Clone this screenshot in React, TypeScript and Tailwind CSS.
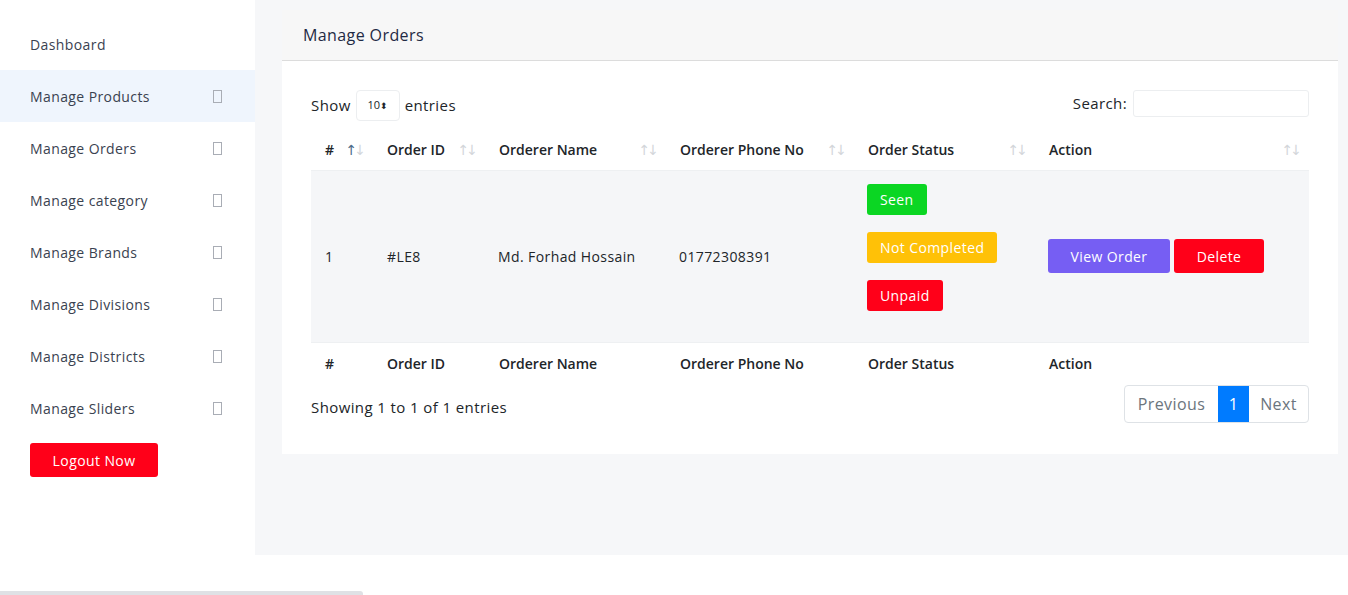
import React from 'react';

const menu = [
  'Manage Products',
  'Manage Orders',
  'Manage category',
  'Manage Brands',
  'Manage Divisions',
  'Manage Districts',
  'Manage Sliders',
];

function Tofu() {
  return <span className="inline-block h-[13px] w-[9px] border border-[#a9adb5]" />;
}

function SortIcon({ active }: { active?: boolean }) {
  return (
    <span className="font-['DejaVu_Sans',sans-serif] text-[14px] font-normal leading-none tracking-[-3px] text-[#d3d6da]">
      <span className={active ? 'text-[#4d6c8a]' : ''}>↑</span>↓
    </span>
  );
}

function Sidebar() {
  return (
    <aside className="w-[255px] shrink-0 bg-white">
      <div className="flex h-[70px] items-center pl-[30px] pt-[18px] text-[14px] text-[#3a4250]">
        Dashboard
      </div>
      {menu.map((m, i) => (
        <div
          key={m}
          className={`flex h-[52px] items-center justify-between pl-[30px] pr-[33px] text-[14px] text-[#3a4250] ${
            i === 0 ? 'bg-[#eff5fd]' : ''
          }`}
        >
          <span>{m}</span>
          <Tofu />
        </div>
      ))}
      <div className="pl-[30px] pt-[9px]">
        <button className="h-[34px] w-[128px] rounded-[3px] bg-[#ff0019] text-[14px] text-white">
          Logout Now
        </button>
      </div>
    </aside>
  );
}

const heads = [
  { t: '#', w: 'w-[62px]', active: true },
  { t: 'Order ID', w: 'w-[112px]' },
  { t: 'Orderer Name', w: 'w-[181px]' },
  { t: 'Orderer Phone No', w: 'w-[188px]' },
  { t: 'Order Status', w: 'w-[181px]' },
  { t: 'Action', w: '' },
];

const badge = 'flex h-[31px] items-center rounded-[3px] px-[13px] font-medium text-white';

function OrdersTable() {
  return (
    <table className="w-full table-fixed border-collapse text-[14px] text-[#212529]">
      <thead>
        <tr className="h-[35px]">
          {heads.map((h) => (
            <th
              key={h.t}
              className={`${h.w} pb-[5px] pl-[14px] pr-[10px] text-left font-semibold tracking-normal`}
            >
              <div className="flex items-center justify-between">
                <span>{h.t}</span>
                <SortIcon active={h.active} />
              </div>
            </th>
          ))}
        </tr>
      </thead>
      <tbody>
        <tr className="border-y border-[#eef0f2] bg-[#f5f6f8]">
          <td className="pl-[14px]">1</td>
          <td className="pl-[14px]">#LE8</td>
          <td className="pl-[13px]">Md. Forhad Hossain</td>
          <td className="pl-[13px]">01772308391</td>
          <td className="pl-[13px] pt-[13px]">
            <div className="flex flex-col items-start gap-[17px] pb-[31px]">
              <span className={`${badge} bg-[#0bd623]`}>Seen</span>
              <span className={`${badge} bg-[#ffc107]`}>Not Completed</span>
              <span className={`${badge} bg-[#ff0019]`}>Unpaid</span>
            </div>
          </td>
          <td className="pl-[13px]">
            <div className="flex gap-[4px]">
              <button className="h-[34px] w-[122px] rounded-[3px] bg-[#765ef3] font-medium text-white">
                View Order
              </button>
              <button className="h-[34px] w-[90px] rounded-[3px] bg-[#ff0019] font-medium text-white">
                Delete
              </button>
            </div>
          </td>
        </tr>
      </tbody>
      <tfoot>
        <tr className="h-[38px]">
          {heads.map((h) => (
            <th key={h.t} className="pl-[14px] pt-[4px] text-left font-semibold tracking-normal">
              {h.t}
            </th>
          ))}
        </tr>
      </tfoot>
    </table>
  );
}

export default function App() {
  return (
    <div className="relative h-[595px] w-[1348px] overflow-hidden bg-white font-['Open_Sans',sans-serif] tracking-[0.4px]">
      <div className="flex h-[555px]">
        <Sidebar />
        <main className="flex-1 bg-[#f6f7f9] pl-[27px] pr-[10px] pt-[10px]">
          <div className="bg-white">
            <div className="flex h-[51px] items-center border-b border-[#dcdcdc] bg-[#f7f7f7] pl-[21px] text-[16px] text-[#1f2a44]">
              Manage Orders
            </div>
            <div className="px-[29px] pb-[31px] pt-[29px]">
              <div className="flex items-center justify-between text-[15px] text-[#212529]">
                <div className="flex items-center">
                  <span>Show</span>
                  <span className="mx-[5px] flex h-[31px] w-[44px] items-center justify-center rounded-[4px] border border-[#eceef0] text-[11px] tracking-normal">
                    10<span className="text-[9px]">⬍</span>
                  </span>
                  <span>entries</span>
                </div>
                <div className="flex items-center pb-[4px]">
                  <span>Search:</span>
                  <span className="ml-[6px] h-[27px] w-[176px] rounded-[3px] border border-[#eceef0]" />
                </div>
              </div>
              <div className="mt-[14px]">
                <OrdersTable />
              </div>
              <div className="mt-[5px] flex items-center justify-between">
                <span className="pt-[7px] text-[15px] text-[#212529]">Showing 1 to 1 of 1 entries</span>
                <div className="flex h-[38px] overflow-hidden rounded-[4px] border border-[#dee2e6] text-[16px]">
                  <span className="flex w-[93px] items-center justify-center text-[#6c757d]">Previous</span>
                  <span className="flex w-[31px] items-center justify-center bg-[#007bff] text-white">1</span>
                  <span className="flex w-[59px] items-center justify-center text-[#6c757d]">Next</span>
                </div>
              </div>
            </div>
          </div>
        </main>
      </div>
      <div className="absolute bottom-0 left-0 h-[4px] w-[363px] rounded-tr-[3px] bg-[#dfe1e5]" />
    </div>
  );
}
